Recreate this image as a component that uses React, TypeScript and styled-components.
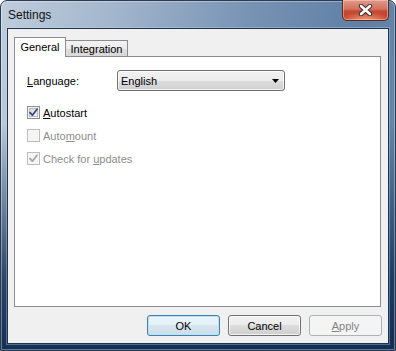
import React from "react";
import styled, { createGlobalStyle, css } from "styled-components";

const GlobalStyle = createGlobalStyle`
  html, body { margin: 0; padding: 0; background: #ffffff; }
  body {
    width: 396px;
    height: 351px;
    overflow: hidden;
    font-family: "Liberation Sans", Arial, sans-serif;
    font-size: 11px;
    color: #000;
  }
  * { box-sizing: border-box; }
`;

const Window = styled.div`
  width: 396px;
  height: 351px;
  border: 1px solid #2b3a4e;
  border-radius: 7px 7px 0 0;
  display: flex;
  flex-direction: column;
  padding: 0 6px 6px 6px;
  background:
    linear-gradient(to bottom, rgba(14, 44, 84, 0) 0px, rgba(14, 44, 84, 0) 35%, rgba(16, 46, 86, 0.85) 80%, rgba(14, 42, 80, 0.96) 100%),
    linear-gradient(100deg, #bfcddd 0%, #a3b6cc 25%, #7793b4 55%, #5f7fa5 80%, #6a89ad 100%);
  box-shadow: inset 0 0 0 1px rgba(255, 255, 255, 0.35);
`;

const TitleBar = styled.div`
  height: 27px;
  display: flex;
  align-items: flex-start;
  justify-content: space-between;
  padding-left: 1px;
`;

const TitleText = styled.span`
  margin-top: 7px;
  font-size: 12px;
  line-height: 14px;
  color: #111;
`;

const CloseButton = styled.div`
  margin-top: -1px;
  width: 47px;
  height: 21px;
  border: 1px solid #5a2a22;
  border-top: none;
  border-radius: 0 0 5px 5px;
  display: flex;
  align-items: center;
  justify-content: center;
  background:
    radial-gradient(ellipse 60% 40% at 50% 100%, rgba(255, 190, 150, 0.75), rgba(255, 190, 150, 0) 100%),
    linear-gradient(to bottom, #e09a88 0%, #d27360 45%, #c44a34 55%, #c23a24 100%);
  box-shadow: inset 0 0 0 1px rgba(255, 220, 210, 0.45);
`;

const Client = styled.div`
  flex: 1;
  display: flex;
  flex-direction: column;
  border: 1px solid #22344a;
  background: #f0f0f0;
  padding: 8px 6px 7px 6px;
  box-shadow: 0 0 0 1px rgba(200, 220, 240, 0.35);
`;

const TabStrip = styled.div`
  height: 19px;
  display: flex;
  align-items: flex-end;
`;

const Tab = styled.div<{ $active?: boolean }>`
  display: flex;
  align-items: center;
  justify-content: center;
  border: 1px solid #898c95;
  border-bottom: none;
  color: #000;
  white-space: nowrap;
  ${(p) =>
    p.$active
      ? css`
          height: 20px;
          width: 52px;
          margin-bottom: -1px;
          background: #ffffff;
          position: relative;
          z-index: 1;
          padding-bottom: 2px;
        `
      : css`
          height: 16px;
          width: 62px;
          border-left: none;
          background: linear-gradient(to bottom, #f3f3f3 0%, #ebebeb 50%, #dedede 50%, #d8d8d8 100%);
          padding-top: 1px;
        `}
`;

const Panel = styled.div`
  flex: 1;
  margin-right: 1px;
  border: 1px solid #898c95;
  background: #ffffff;
  padding: 13px 12px 0 12px;
  display: flex;
  flex-direction: column;
`;

const FieldRow = styled.div`
  height: 21px;
  display: flex;
  align-items: center;
  margin-bottom: 13px;
`;

const FieldLabel = styled.span`
  width: 90px;
  padding-top: 1px;
`;

const Combo = styled.div`
  width: 168px;
  height: 21px;
  border: 1px solid #707070;
  border-radius: 3px;
  display: flex;
  align-items: center;
  justify-content: space-between;
  padding: 1px 5px 0 3px;
  background: linear-gradient(to bottom, #f2f2f2 0%, #ebebeb 50%, #dddddd 50%, #cfcfcf 100%);
  box-shadow: inset 0 0 0 1px rgba(255, 255, 255, 0.75);
`;

const CheckList = styled.div`
  display: flex;
  flex-direction: column;
  gap: 6px;
`;

const CheckRow = styled.div<{ $disabled?: boolean }>`
  height: 17px;
  display: flex;
  align-items: center;
  gap: 3px;
  color: ${(p) => (p.$disabled ? "#8d8d8d" : "#000")};
`;

const Box = styled.div<{ $disabled?: boolean }>`
  width: 13px;
  height: 13px;
  display: flex;
  align-items: center;
  justify-content: center;
  border: 1px solid ${(p) => (p.$disabled ? "#bcbcbc" : "#8e8f8f")};
  background: ${(p) =>
    p.$disabled
      ? "#f4f4f4"
      : "linear-gradient(135deg, #cbcfd5 0%, #e8e9eb 60%, #f8f8f8 100%)"};
  box-shadow: ${(p) =>
    p.$disabled
      ? "inset 0 0 0 1px #f7f7f7"
      : "inset 0 0 0 1px #f4f4f4, inset 0 0 0 2px #b9bdc4"};
`;

const ButtonRow = styled.div`
  margin-top: 8px;
  display: flex;
  justify-content: flex-end;
  gap: 8px;
`;

const Button = styled.div<{ $variant?: "default" | "normal" | "disabled" }>`
  width: 73px;
  height: 21px;
  border-radius: 3px;
  display: flex;
  align-items: center;
  justify-content: center;
  padding-top: 1px;
  ${(p) =>
    p.$variant === "disabled"
      ? css`
          border: 1px solid #adb2b5;
          background: #f4f4f4;
          color: #838383;
        `
      : p.$variant === "default"
      ? css`
          border: 1px solid #3c7fb1;
          color: #000;
          background: linear-gradient(to bottom, #eaf6fd 0%, #e4eff6 50%, #d6e6f0 50%, #cfdde7 100%);
          box-shadow: inset 0 0 0 1px #bfe2f7;
        `
      : css`
          border: 1px solid #707070;
          color: #000;
          background: linear-gradient(to bottom, #f2f2f2 0%, #ebebeb 50%, #dddddd 50%, #cfcfcf 100%);
          box-shadow: inset 0 0 0 1px rgba(255, 255, 255, 0.75);
        `}
`;

const U = styled.u`
  text-underline-offset: 1px;
`;

const CheckMark = ({ color }: { color: string }) => (
  <svg width="9" height="9" viewBox="0 0 9 9">
    <path d="M1 4.6 L3.4 7.2 L8 1.2" fill="none" stroke={color} strokeWidth="1.7" strokeLinecap="round" strokeLinejoin="round" />
  </svg>
);

const CloseGlyph = () => (
  <svg width="15" height="12" viewBox="0 0 15 12">
    <path d="M3 2 L12 10 M12 2 L3 10" stroke="#3b2b2b" strokeWidth="4.4" strokeLinecap="round" fill="none" />
    <path d="M3 2 L12 10 M12 2 L3 10" stroke="#ffffff" strokeWidth="2.6" strokeLinecap="round" fill="none" />
  </svg>
);

const Arrow = () => (
  <svg width="7" height="4" viewBox="0 0 7 4">
    <path d="M0 0 H7 L3.5 4 Z" fill="#000" />
  </svg>
);

export default function App() {
  return (
    <>
      <GlobalStyle />
      <Window>
        <TitleBar>
          <TitleText>Settings</TitleText>
          <CloseButton>
            <CloseGlyph />
          </CloseButton>
        </TitleBar>
        <Client>
          <TabStrip>
            <Tab $active>General</Tab>
            <Tab>Integration</Tab>
          </TabStrip>
          <Panel>
            <FieldRow>
              <FieldLabel>
                <U>L</U>anguage:
              </FieldLabel>
              <Combo>
                <span>English</span>
                <Arrow />
              </Combo>
            </FieldRow>
            <CheckList>
              <CheckRow>
                <Box>
                  <CheckMark color="#34497a" />
                </Box>
                <span>
                  <U>A</U>utostart
                </span>
              </CheckRow>
              <CheckRow $disabled>
                <Box $disabled />
                <span>
                  Auto<U>m</U>ount
                </span>
              </CheckRow>
              <CheckRow $disabled>
                <Box $disabled>
                  <CheckMark color="#a3a3a3" />
                </Box>
                <span>
                  Check for <U>u</U>pdates
                </span>
              </CheckRow>
            </CheckList>
          </Panel>
          <ButtonRow>
            <Button $variant="default">OK</Button>
            <Button $variant="normal">Cancel</Button>
            <Button $variant="disabled">
              <span>
                <U>A</U>pply
              </span>
            </Button>
          </ButtonRow>
        </Client>
      </Window>
    </>
  );
}
